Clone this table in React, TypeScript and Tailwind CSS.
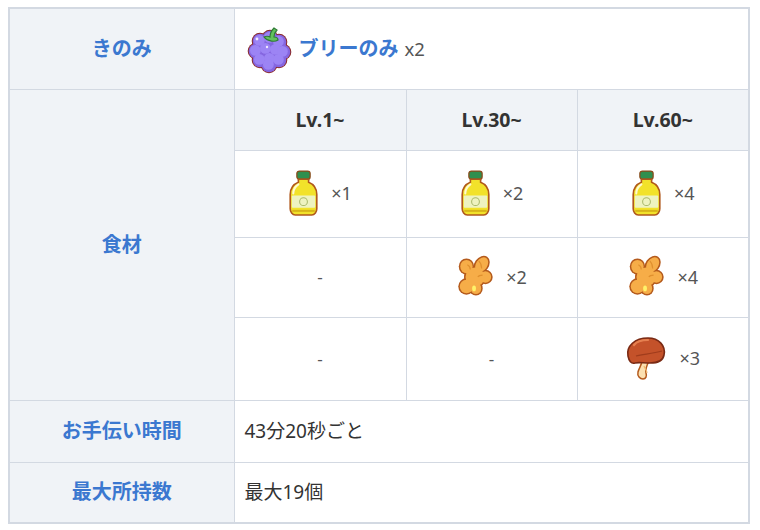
import React from "react";

const font = { fontFamily: '"Noto Sans", "Noto Sans CJK JP", sans-serif' };

function Berry() {
  const dots = [
    [15, 17],
    [25, 14],
    [34, 18],
    [11, 27],
    [21, 25],
    [31, 26],
    [38, 28],
    [15, 36],
    [25, 35],
    [34, 36],
    [24, 41],
  ];
  return (
    <svg width="48" height="50" viewBox="0 0 48 50">
      <ellipse cx="24.5" cy="28" rx="19" ry="17" fill="#8a2a2a" />
      {dots.map(([x, y], i) => (
        <circle key={"o" + i} cx={x} cy={y} r="8.3" fill="#8a2a2a" />
      ))}
      <ellipse cx="24.5" cy="28" rx="18" ry="16" fill="#8566e0" />
      {dots.map(([x, y], i) => (
        <circle key={"f" + i} cx={x} cy={y} r="7.3" fill="#8566e0" />
      ))}
      {dots.map(([x, y], i) => (
        <circle key={"h" + i} cx={x - 0.6} cy={y - 0.6} r="5.4" fill="#9c84f4" />
      ))}
      <circle cx="12" cy="15" r="1.4" fill="#efe8ff" />
      <circle cx="22" cy="23" r="1.2" fill="#efe8ff" />
      <path
        d="M19 13c2-1 4-1 6 0 0-3 1-6 4-9l3 2c-2 2-3 5-3 7 2 0 4 1 4 3-3 2-10 2-14-3z"
        fill="#62c25c"
        stroke="#2f7a36"
        strokeWidth="1.2"
      />
    </svg>
  );
}

function Bottle() {
  return (
    <svg width="31" height="47" viewBox="0 0 30 46">
      <rect x="8.5" y="1" width="13" height="8" rx="2.5" fill="#2f8f4e" stroke="#8a4a1a" strokeWidth="1.2" />
      <path
        d="M10 9h10v3c5 2 8 6 8 12v14c0 3-2 6-5 6H7c-3 0-5-3-5-6V24c0-6 3-10 8-12z"
        fill="#f2e22a"
        stroke="#b0581c"
        strokeWidth="1.6"
      />
      <path d="M5 23c0-4 2-7 5-9" stroke="#fffbd0" strokeWidth="2" fill="none" strokeLinecap="round" />
      <rect x="3.5" y="25" width="23" height="12" rx="1" fill="#eef3c0" />
      <circle cx="15" cy="31" r="3.8" fill="none" stroke="#a8b86a" strokeWidth="1" />
      <path d="M4 40h22" stroke="#d8b418" strokeWidth="2" />
    </svg>
  );
}

function Ginger() {
  const lobes: [number, number, number, number, number][] = [
    [11, 12, 6.5, 7, 0],
    [27, 10, 6, 8.5, 35],
    [31, 23, 6, 6, 0],
    [20, 23, 10, 10, 0],
    [11, 33, 7, 7, 0],
    [21, 35, 5.5, 6, 0],
  ];
  return (
    <svg width="38" height="44" viewBox="0 0 40 46">
      {lobes.map(([x, y, rx, ry, r], i) => (
        <ellipse key={"o" + i} cx={x} cy={y} rx={rx + 1.6} ry={ry + 1.6} transform={`rotate(${r} ${x} ${y})`} fill="#b45a1c" />
      ))}
      {lobes.map(([x, y, rx, ry, r], i) => (
        <ellipse key={"f" + i} cx={x} cy={y} rx={rx} ry={ry} transform={`rotate(${r} ${x} ${y})`} fill="#f6ad48" />
      ))}
      <path d="M24 6c2 2 3 5 3 8M28 21c-2 0-4 0-5 2M12 10c2 1 3 3 3 5" stroke="#e0902e" strokeWidth="1.2" fill="none" />
      <ellipse cx="19" cy="35" rx="2" ry="3" fill="#fff26a" />
    </svg>
  );
}

function Mushroom() {
  return (
    <svg width="42" height="46" viewBox="0 0 42 46">
      <path
        d="M17 24c0 5-3 8-4 12-1 4 2 7 5 7s4-3 3-6c-1-4 1-8 3-12z"
        fill="#fbe0b0"
        stroke="#b45a1c"
        strokeWidth="1.5"
      />
      <path d="M19 30c1 3 3 4 3 7" stroke="#f0b870" strokeWidth="1.2" fill="none" />
      <path
        d="M3 20C1 10 10 2 23 2c11 0 18 8 16 17-1 6-6 8-14 8-7 0-12-1-15 0-4 1-6-2-7-7z"
        fill="#c4522a"
        stroke="#7a2a14"
        strokeWidth="1.6"
      />
      <path d="M9 9c3-4 8-5 14-5" stroke="#e58050" strokeWidth="2.2" fill="none" strokeLinecap="round" />
      <path d="M11 20c7-2 16-2 26-5" stroke="#a03c1c" strokeWidth="1.2" fill="none" />
    </svg>
  );
}

function Item({ icon, count }: { icon: React.ReactNode; count: string }) {
  return (
    <div className="flex items-center justify-center gap-[12px]">
      {icon}
      <span className="text-[18px] text-[#555]">×{count}</span>
    </div>
  );
}

const border = "border border-[#d3d9e2]";
const th = `${border} bg-[#f0f3f7] text-center text-[20px] font-bold text-[#3b78d0]`;
const td = `${border} bg-white text-center`;
const lv = `${border} bg-[#f0f3f7] text-center text-[19.5px] font-bold text-[#333]`;
const dash = `${td} text-[17px] text-[#555]`;

export default function App() {
  return (
    <div className="h-[530px] w-[760px] bg-white pl-[8px] pt-[7px]" style={font}>
      <table className="w-[741px] table-fixed border-collapse border-2 border-[#d3d9e2]">
        <colgroup>
          <col className="w-[225px]" />
          <col className="w-[172px]" />
          <col className="w-[171px]" />
          <col className="w-[172px]" />
        </colgroup>
        <tbody>
          <tr className="h-[81px]">
            <th className={th}>きのみ</th>
            <td colSpan={3} className={`${border} bg-white pl-[10px]`}>
              <div className="flex items-center gap-[6px]">
                <Berry />
                <span className="text-[20px] font-bold text-[#3b78d0]">ブリーのみ</span>
                <span className="text-[18.5px] text-[#555]">x2</span>
              </div>
            </td>
          </tr>
          <tr className="h-[61px]">
            <th rowSpan={4} className={th}>食材</th>
            <th className={lv}>Lv.1~</th>
            <th className={lv}>Lv.30~</th>
            <th className={lv}>Lv.60~</th>
          </tr>
          <tr className="h-[87px]">
            <td className={td}><Item icon={<Bottle />} count="1" /></td>
            <td className={td}><Item icon={<Bottle />} count="2" /></td>
            <td className={td}><Item icon={<Bottle />} count="4" /></td>
          </tr>
          <tr className="h-[80px]">
            <td className={dash}>-</td>
            <td className={td}><Item icon={<Ginger />} count="2" /></td>
            <td className={td}><Item icon={<Ginger />} count="4" /></td>
          </tr>
          <tr className="h-[83px]">
            <td className={dash}>-</td>
            <td className={dash}>-</td>
            <td className={td}><Item icon={<Mushroom />} count="3" /></td>
          </tr>
          <tr className="h-[62px]">
            <th className={th}>お手伝い時間</th>
            <td colSpan={3} className={`${border} bg-white pl-[10px] text-[19px] text-[#333]`}>
              43分20秒ごと
            </td>
          </tr>
          <tr className="h-[61px]">
            <th className={th}>最大所持数</th>
            <td colSpan={3} className={`${border} bg-white pl-[10px] text-[19px] text-[#333]`}>
              最大19個
            </td>
          </tr>
        </tbody>
      </table>
    </div>
  );
}
